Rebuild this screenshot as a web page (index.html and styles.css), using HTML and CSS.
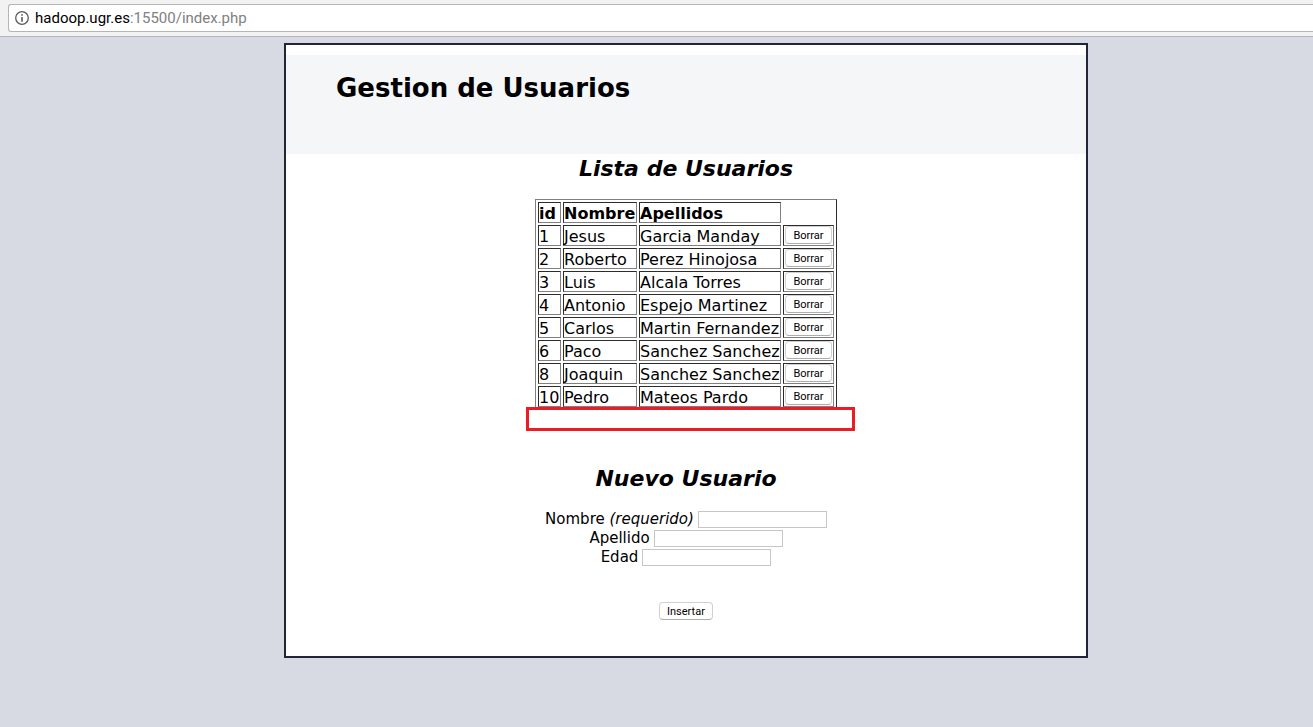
FILE: index.html
```html
<!DOCTYPE html>
<html lang="es">
<head>
<meta charset="utf-8">
<title>Gestion de Usuarios</title>
<link rel="stylesheet" href="styles.css">
</head>
<body>
<div class="toolbar">
  <div class="address">
    <svg class="info" viewBox="0 0 14 14" aria-hidden="true"><circle cx="7" cy="7" r="6.3" fill="none" stroke="#5a5a5a" stroke-width="1.3"/><path d="M6.2 3.2h1.6v1.6H6.2zM6.2 6h1.6v4.8H6.2z" fill="#5a5a5a"/></svg>
    <span class="url"><span class="host">hadoop.ugr.es</span>:15500/index.php</span>
  </div>
</div>
<div class="page">
  <main class="card">
    <header class="banner"><h1>Gestion de Usuarios</h1></header>
    <section class="list">
      <h2>Lista de Usuarios</h2>
      <table class="users">
        <thead><tr><th class="c-id">id</th><th class="c-name">Nombre</th><th class="c-last">Apellidos</th></tr></thead>
        <tbody>
          <tr><td>1</td><td>Jesus</td><td>Garcia Manday</td><td class="action"><button class="btn" type="button">Borrar</button></td></tr>
          <tr><td>2</td><td>Roberto</td><td>Perez Hinojosa</td><td class="action"><button class="btn" type="button">Borrar</button></td></tr>
          <tr><td>3</td><td>Luis</td><td>Alcala Torres</td><td class="action"><button class="btn" type="button">Borrar</button></td></tr>
          <tr><td>4</td><td>Antonio</td><td>Espejo Martinez</td><td class="action"><button class="btn" type="button">Borrar</button></td></tr>
          <tr><td>5</td><td>Carlos</td><td>Martin Fernandez</td><td class="action"><button class="btn" type="button">Borrar</button></td></tr>
          <tr><td>6</td><td>Paco</td><td>Sanchez Sanchez</td><td class="action"><button class="btn" type="button">Borrar</button></td></tr>
          <tr><td>8</td><td>Joaquin</td><td>Sanchez Sanchez</td><td class="action"><button class="btn" type="button">Borrar</button></td></tr>
          <tr><td>10</td><td>Pedro</td><td>Mateos Pardo</td><td class="action"><button class="btn" type="button">Borrar</button></td></tr>
        </tbody>
      </table>
      <div class="marker"></div>
    </section>
    <form class="new-user">
      <h2>Nuevo Usuario</h2>
      <div class="field"><label for="nombre">Nombre <em>(requerido)</em></label><input id="nombre" type="text"></div>
      <div class="field"><label for="apellido">Apellido</label><input id="apellido" type="text"></div>
      <div class="field"><label for="edad">Edad</label><input id="edad" type="text"></div>
      <button class="btn submit" type="button">Insertar</button>
    </form>
  </main>
</div>
</body>
</html>
```
FILE: styles.css
```css
* { box-sizing: border-box; }
body {
  margin: 0;
  background: #d7dae2;
  color: #000;
  font: 16px/19px Verdana, "DejaVu Sans", sans-serif;
}
.toolbar {
  padding: 4px 0 4px 8px;
  background: #f2f2f2;
  border-bottom: 1px solid #b6b4b8;
}
.address {
  display: flex;
  align-items: center;
  gap: 6px;
  height: 28px;
  padding-left: 6px;
  background: #fff;
  border: 1px solid #b5b5b5;
  border-right: 0;
  border-radius: 3px 0 0 3px;
}
.info { width: 14px; height: 14px; }
.url { color: #808080; font: 15px/18px Roboto, sans-serif; }
.host { color: #000; }
.page { padding: 6px 0 40px 59px; }
.card {
  max-width: 804px;
  margin: 0 auto;
  padding: 10px 0 36px;
  background: #fff;
  border: 2px solid #22253a;
}
.banner {
  min-height: 99px;
  padding: 17px 50px;
  background: #f4f6f8;
}
h1 { margin: 0; font-size: 26px; line-height: 32px; }
h2 { margin: 0; font-size: 22px; line-height: 28px; font-style: italic; text-align: center; }
.list, .new-user { display: flex; flex-direction: column; align-items: center; }
.list { padding-top: 1px; }
.users {
  margin-top: 16px;
  border: 1px solid;
  border-color: #808080 #2c2c2c #2c2c2c #808080;
  border-spacing: 2px;
}
.users th, .users td {
  height: 21px;
  padding: 2px 0 0;
  border: 1px solid;
  border-color: #2c2c2c #808080 #808080 #2c2c2c;
  line-height: 17px;
  text-align: left;
  white-space: nowrap;
}
.c-id { width: 23px; }
.c-name { width: 74px; }
.c-last { width: 142px; }
.users .action { width: 51px; padding: 0 1px; vertical-align: top; }
.btn {
  display: block;
  height: 18px;
  padding: 1px 7px 0;
  background: #fff;
  border: 1px solid #d0d0d0;
  border-bottom-color: #adadad;
  border-radius: 4px;
  color: #000;
  font: 11px/15px Roboto, sans-serif;
}
.action .btn { width: 100%; }
.marker {
  position: relative;
  width: 329px;
  height: 24px;
  margin: -3px 0 0 9px;
  margin-right: 0;
  background: #fff;
  border: 3px solid #ed1c24;
}
.new-user { margin-top: 34px; font-size: 15px; }
.new-user h2 { margin-bottom: 17px; }
.field { display: flex; align-items: center; gap: 4px; }
.field input {
  width: 129px;
  height: 17px;
  padding: 0 2px;
  background: #fff;
  border: 1px solid #c6c6c6;
  font: inherit;
}
.submit { margin-top: 35px; }
```
